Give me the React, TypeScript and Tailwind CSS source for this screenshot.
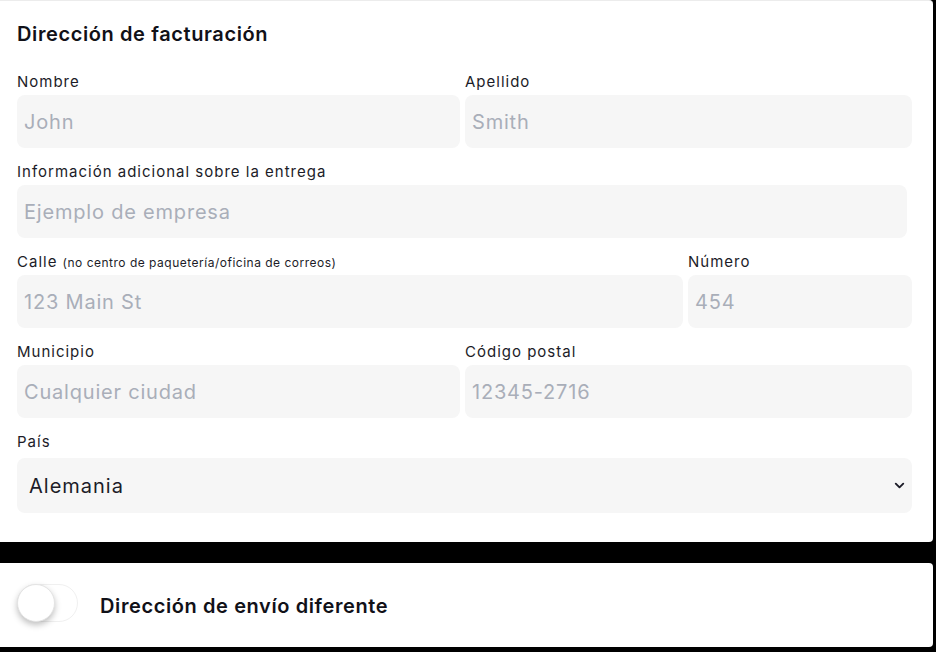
import { ChevronDown } from "lucide-react";

const font = { fontFamily: "Inter, 'Noto Sans', sans-serif" };

type FieldProps = {
  label: React.ReactNode;
  placeholder: string;
  width: string;
};

function Field({ label, placeholder, width }: FieldProps) {
  return (
    <div className={`flex flex-col ${width}`}>
      <label className="h-[20px] text-[15px] leading-[20px] tracking-[1px] text-[#1c1c28]">{label}</label>
      <input
        className="mt-[3px] h-[53px] w-full rounded-[8px] bg-[#f6f6f6] px-[7px] text-[20px] tracking-[0.8px] text-[#1c1c28] outline-none placeholder:text-[#a9aeb9]"
        placeholder={placeholder}
        style={font}
      />
    </div>
  );
}

export default function App() {
  return (
    <div className="min-h-[652px] bg-black pb-[5px]" style={font}>
      <section className="w-[933px] rounded-r-[4px] border-t border-[#ececec] bg-white pb-[29px] pl-[17px] pt-[23px]">
        <h2 className="h-[20px] text-[20px] font-semibold leading-[20px] tracking-[0.6px] text-[#111118]">
          Dirección de facturación
        </h2>

        <div className="mt-[28px] flex gap-[5px]">
          <Field label="Nombre" placeholder="John" width="w-[443px]" />
          <Field label="Apellido" placeholder="Smith" width="w-[447px]" />
        </div>

        <div className="mt-[14px] flex">
          <Field
            label="Información adicional sobre la entrega"
            placeholder="Ejemplo de empresa"
            width="w-[890px]"
          />
        </div>

        <div className="mt-[14px] flex gap-[5px]">
          <Field
            label={
              <>
                Calle <span className="text-[12px] tracking-[0.5px]">(no centro de paquetería/oficina de correos)</span>
              </>
            }
            placeholder="123 Main St"
            width="w-[666px]"
          />
          <Field label="Número" placeholder="454" width="w-[224px]" />
        </div>

        <div className="mt-[14px] flex gap-[5px]">
          <Field label="Municipio" placeholder="Cualquier ciudad" width="w-[443px]" />
          <Field label="Código postal" placeholder="12345-2716" width="w-[447px]" />
        </div>

        <div className="mt-[14px] flex w-[895px] flex-col">
          <label className="h-[20px] text-[15px] leading-[20px] tracking-[1px] text-[#1c1c28]">País</label>
          <div className="relative mt-[6px] h-[55px] w-full">
            <select
              className="h-full w-full appearance-none rounded-[8px] bg-[#f6f6f6] pl-[12px] text-[20px] tracking-[1px] text-[#1c1c28] outline-none"
              style={font}
              defaultValue="de"
            >
              <option value="de">Alemania</option>
              <option value="es">España</option>
              <option value="fr">Francia</option>
            </select>
            <ChevronDown
              className="pointer-events-none absolute right-[5px] top-[20px] h-[15px] w-[15px] text-[#1c1c28]"
              strokeWidth={3}
            />
          </div>
        </div>
      </section>

      <section className="mt-[21px] flex h-[84px] w-[933px] items-center rounded-r-[4px] bg-white pl-[17px]">
        <button
          className="relative mb-[5px] h-[38px] w-[61px] rounded-full border border-[#f0f0f0] bg-white"
          type="button"
        >
          <span className="absolute left-[-1px] top-[-1px] h-[38px] w-[38px] rounded-full border border-[#e4e4e4] bg-white shadow-[0_3px_6px_rgba(0,0,0,0.25)]" />
        </button>
        <span className="ml-[22px] mt-[1px] text-[20px] font-semibold tracking-[0.6px] text-[#111118]">
          Dirección de envío diferente
        </span>
      </section>
    </div>
  );
}
